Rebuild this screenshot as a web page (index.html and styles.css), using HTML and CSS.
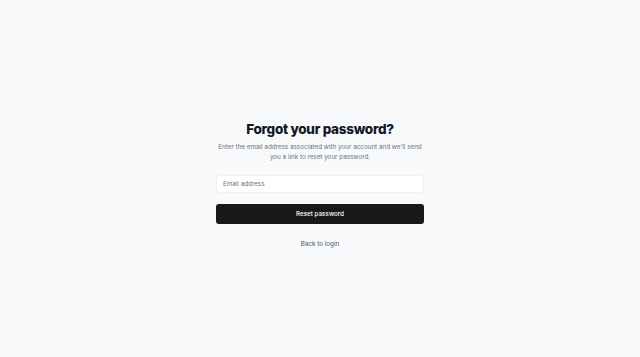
FILE: index.html
```html
<!DOCTYPE html>
<html>
<head>
<meta charset="utf-8">
<link rel="stylesheet" href="styles.css">
</head>
<body>
<main class="page">
  <div class="card">
    <h1 class="title">Forgot your password?</h1>
    <p class="desc">Enter the email address associated with your account and we'll send you a link to reset your password.</p>
    <form class="form">
      <input class="input" type="email" placeholder="Email address">
      <button class="btn" type="button">Reset password</button>
    </form>
    <a class="back" href="#">Back to login</a>
  </div>
</main>
</body>
</html>
```
FILE: styles.css
```css
* { box-sizing: border-box; }
html, body { margin: 0; padding: 0; }
body {
  background: #f8f9fb;
  font-family: Inter, "Noto Sans", sans-serif;
  color: #111827;
}
.page {
  min-height: 357px;
  display: flex;
  justify-content: center;
  padding-top: 120px;
}
.card {
  width: 208px;
  display: flex;
  flex-direction: column;
  align-items: center;
}
.title {
  margin: 0;
  font-size: 13.5px;
  line-height: 18px;
  font-weight: 800;
  letter-spacing: -0.3px;
  color: #111827;
}
.desc {
  margin: 4px 0 0;
  font-size: 6.3px;
  line-height: 10px;
  color: #6b7280;
  text-align: center;
}
.form {
  width: 100%;
  margin-top: 13px;
  display: flex;
  flex-direction: column;
  gap: 11px;
}
.input {
  width: 100%;
  height: 18px;
  border: 1px solid #eef0f3;
  border-radius: 3px;
  background: #fff;
  padding: 0 6px;
  font-family: inherit;
  font-size: 6.3px;
  outline: none;
}
.input::placeholder { color: #6b7280; }
.btn {
  width: 100%;
  height: 20px;
  border: none;
  border-radius: 3px;
  background: #18181b;
  color: #fff;
  font-family: inherit;
  font-size: 6.3px;
  font-weight: 500;
  padding: 0;
}
.back {
  margin-top: 15px;
  font-size: 6.3px;
  line-height: 10px;
  color: #4b5563;
  text-decoration: none;
}
```
